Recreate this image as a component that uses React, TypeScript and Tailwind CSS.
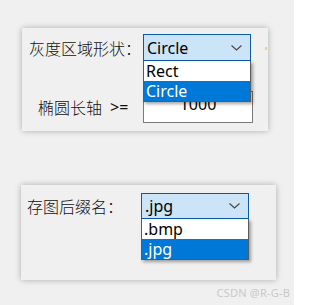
import React from "react";

function Chevron() {
  return (
    <svg width="11" height="6" viewBox="0 0 11 6" className="block">
      <path d="M0.5 0.5 L5.5 5 L10.5 0.5" fill="none" stroke="#444" strokeWidth="1.1" />
    </svg>
  );
}

function Combo({
  value,
  items,
  selected,
  h,
}: {
  value: string;
  items: string[];
  selected: number;
  h: string;
}) {
  return (
    <div className="relative w-[108px]">
      <div
        className={`${h} w-[108px] border border-[#0a5ca6] bg-[#cce4f7] flex items-center justify-between pl-[3px] pr-[8px] text-[16px] text-black`}
      >
        <span className="leading-none">{value}</span>
        <Chevron />
      </div>
      <div className="absolute left-0 top-full w-[108px] z-10 border border-[#5a5a5a] border-t-0 bg-white shadow-[2px_2px_3px_rgba(0,0,0,0.35)]">
        {items.map((it, i) => (
          <div
            key={it}
            className={`h-[20px] flex items-center pl-[2px] text-[16px] leading-none ${
              i === selected ? "bg-[#0078d7] text-white" : "bg-white text-black"
            }`}
          >
            {it}
          </div>
        ))}
      </div>
    </div>
  );
}

export default function App() {
  return (
    <div
      className="w-[294px] h-[305px] bg-[#f0f0f0] overflow-hidden flex flex-col"
      style={{ fontFamily: '"Noto Sans", "Noto Sans CJK SC", sans-serif' }}
    >
      <div className="ml-[22px] mt-[28px] w-[246px] h-[103px] bg-[#f0f0f0] shadow-[0_0_6px_rgba(0,0,0,0.28)] pt-[6px] pl-[7px] flex flex-col relative">
        <div className="flex items-center">
          <div className="w-[114px] text-[16px] text-[#111] leading-none whitespace-nowrap font-light" style={{ fontFamily: '"Noto Sans CJK SC", sans-serif' }}>
            灰度区域形状：
          </div>
          <Combo value="Circle" items={["Rect", "Circle"]} selected={1} h="h-[27px]" />
        </div>
        <div className="flex items-center mt-[30px]">
          <div className="w-[114px] pl-[9px] flex items-center text-[16px] text-[#111] leading-none whitespace-nowrap">
            <span className="font-light" style={{ fontFamily: '"Noto Sans CJK SC", sans-serif' }}>椭圆长轴</span>
            <span className="ml-[8px]">&gt;=</span>
          </div>
          <div className="w-[110px] h-[32px] border border-[#7a7a7a] bg-white flex items-center justify-center text-[16px] leading-none pb-[6px] text-black">
            1000
          </div>
        </div>
        <div className="absolute right-[1px] top-[19px] w-[2px] h-[3px] bg-[#f2c98f]" />
      </div>

      <div className="ml-[21px] mt-[54px] w-[255px] h-[95px] bg-[#f0f0f0] shadow-[0_0_6px_rgba(0,0,0,0.28)] pt-[8px] pl-[6px] flex flex-col">
        <div className="flex items-center">
          <div className="w-[114px] text-[16px] text-[#111] leading-none whitespace-nowrap font-light" style={{ fontFamily: '"Noto Sans CJK SC", sans-serif' }}>
            存图后缀名：
          </div>
          <Combo value=".jpg" items={[".bmp", ".jpg"]} selected={1} h="h-[26px]" />
        </div>
      </div>

      <div className="flex justify-end pr-[4px] mt-[7px]">
        <span className="text-[11px] leading-none text-[#c9c9c9] tracking-[0.2px]">CSDN @R-G-B</span>
      </div>
    </div>
  );
}
